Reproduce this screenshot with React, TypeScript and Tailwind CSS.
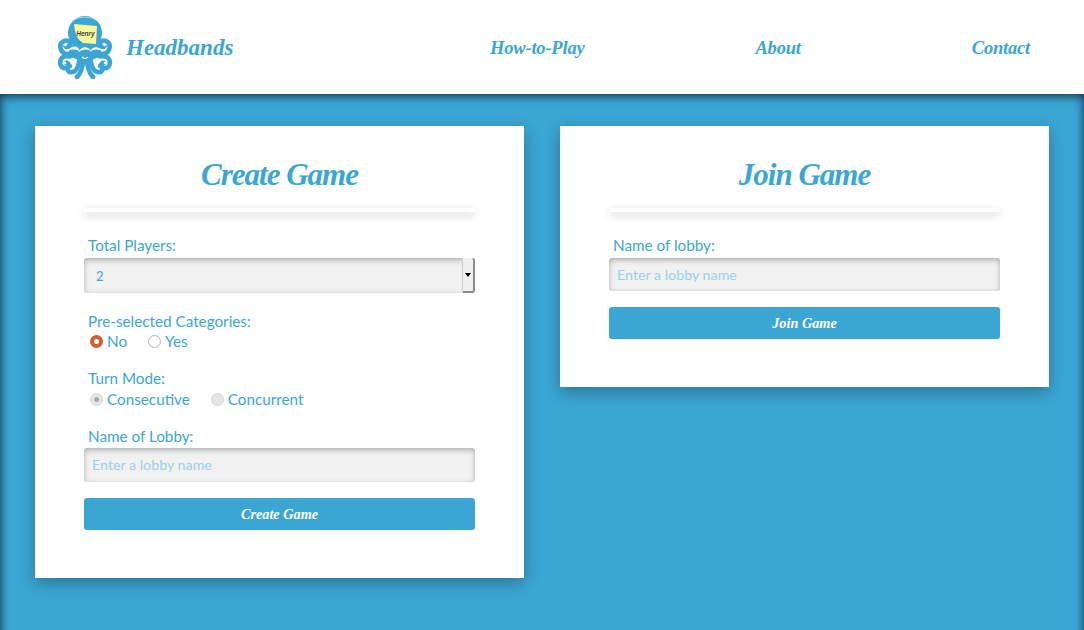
const blue = 'text-[#3ba6d4]';
const logoFont = "[font-family:'Liberation_Serif',serif] italic font-bold";
const bodyFont = "[font-family:Lato,'Open_Sans',sans-serif]";

function Octopus() {
  return (
    <svg width="56" height="64" viewBox="0 0 56 64" className="shrink-0">
      <g fill="none" stroke="#3ba6d4" strokeWidth="4.6" strokeLinecap="round">
        <path d="M20 35 C13 41 5 40 3.5 33 C2 26 11 23 13 28 C14 31 10 33 8.5 31" />
        <path d="M36 35 C43 41 51 40 52.5 33 C54 26 45 23 43 28 C42 31 46 33 47.5 31" />
        <path d="M18 38 C13 45 10 39 6 42 C1 46 3 54 9 53 C13 52 12 47 9 48" />
        <path d="M38 38 C43 45 46 39 50 42 C55 46 53 54 47 53 C43 52 44 47 47 48" />
        <path d="M23 42 C22 50 20 57 15 57 C10 58 9 52 13 51" />
        <path d="M33 42 C34 50 36 57 41 57 C46 58 47 52 43 51" />
        <path d="M26 44 C26 52 24 58 20 62" />
        <path d="M30 44 C30 52 32 58 36 62" />
      </g>
      <circle cx="28" cy="18" r="17" fill="#3ba6d4" />
      <ellipse cx="28" cy="36" rx="16" ry="10" fill="#3ba6d4" />
      <path d="M15 6 Q28 -2 41 6" fill="none" stroke="#a9dcf0" strokeWidth="1" />
      <g fill="#ffffff">
        <path d="M11 36 C14 30 22 30 23 37 C20 34 15 34 11 36 Z" />
        <path d="M22 37 C24 31 31 31 34 36 C30 34 26 34 22 37 Z" />
        <path d="M33 37 C35 31 42 31 45 36 C41 34 37 34 33 37 Z" />
        <circle cx="8.5" cy="30" r="1.3" />
        <circle cx="47.5" cy="30" r="1.3" />
        <circle cx="8" cy="48" r="1.3" />
        <circle cx="48" cy="48" r="1.3" />
      </g>
      <path d="M25 42 Q28 45 31 42" fill="none" stroke="#ffffff" strokeWidth="1.2" />
      <path d="M17 9 L40 11 L39 29 L26 28 Q18 24 17 9 Z" fill="#fdf89a" />
      <text x="28.5" y="20.5" textAnchor="middle" fontSize="6.5" fontWeight="bold" fontStyle="italic" fontFamily="Liberation Sans, sans-serif" fill="#444444">
        Henry
      </text>
    </svg>
  );
}

function Radio({ label, checked, disabled }: { label: string; checked?: boolean; disabled?: boolean }) {
  let circle = 'border border-[#b4b4b4] bg-white';
  if (checked && !disabled) circle = 'border-[4px] border-[#cf5f2e] bg-white';
  if (disabled) circle = 'border border-[#d6d6d6] bg-[#e6e6e6]';
  return (
    <label className="flex items-center gap-[4px]">
      <span className={`flex h-[13px] w-[13px] items-center justify-center rounded-full ${circle}`}>
        {checked && disabled && <span className="h-[5px] w-[5px] rounded-full bg-[#a8a8a8]" />}
      </span>
      {label}
    </label>
  );
}

function Card({ title, children }: { title: string; children: React.ReactNode }) {
  return (
    <section className="w-[489px] bg-white px-[49px] pt-[28px] pb-[48px] shadow-[0_5px_15px_rgba(0,0,0,0.3)]">
      <h2 className={`${logoFont} text-center text-[31px] leading-[42px] tracking-[-1px] ${blue}`}>{title}</h2>
      <div className="mt-[12px] h-[4px] bg-white shadow-[0_3px_8px_rgba(0,0,0,0.2)]" />
      {children}
    </section>
  );
}

function TextField({ tall }: { tall?: boolean }) {
  return (
    <input
      placeholder="Enter a lobby name"
      className={`${tall ? 'h-[34px]' : 'h-[33px]'} w-full rounded-[3px] bg-[#f1f1f1] px-[8px] pb-[1px] text-[14.25px] text-[#3ba6d4] shadow-[inset_0_3px_6px_-1px_rgba(0,0,0,0.25),inset_0_0_4px_rgba(0,0,0,0.1)] outline-none placeholder:text-[#9bd0e6]`}
    />
  );
}

export default function App() {
  return (
    <div className={`flex h-[630px] w-[1084px] flex-col overflow-hidden bg-[#3ba6d4] ${bodyFont}`}>
      <header className="z-10 flex h-[94px] shrink-0 items-center bg-white pl-[57px] pr-[54px]">
        <Octopus />
        <span className={`${logoFont} mt-[2px] ml-[13px] text-[23px] ${blue}`}>Headbands</span>
        <nav className={`${logoFont} mt-[3px] ml-auto flex text-[18.5px] tracking-[-0.2px] ${blue}`}>
          <a className="mr-[171px]">How-to-Play</a>
          <a className="mr-[171px]">About</a>
          <a>Contact</a>
        </nav>
      </header>

      <main className="flex h-[560px] shrink-0 items-start gap-[36px] px-[35px] pt-[32px] shadow-[inset_0_3px_10px_rgba(0,0,0,0.45),inset_0_0_10px_rgba(0,0,0,0.4)]">
        <Card title="Create Game">
          <div className={`mt-[23px] text-[15.25px] ${blue}`}>
            <p className="pl-[4px] leading-[20px]">Total Players:</p>
            <div className="relative mt-[3px]">
              <select className="h-[35px] w-full appearance-none rounded-[3px] bg-[#f1f1f1] pl-[12px] pt-[2px] text-[13px] shadow-[inset_0_3px_6px_-1px_rgba(0,0,0,0.25),inset_0_0_4px_rgba(0,0,0,0.1)] outline-none">
                <option>2</option>
              </select>
              <span className="absolute top-0 right-0 flex h-[35px] w-[12px] items-center justify-center rounded-r-[3px] border-r-2 border-b-2 border-[#8a8a8a] bg-[#f0f0f0] shadow-[-1px_0_0_#cfcfcf]">
                <span className="h-0 w-0 border-x-[3px] border-t-[4px] border-x-transparent border-t-black" />
              </span>
            </div>

            <p className="mt-[18px] pl-[4px] leading-[20px]">Pre-selected Categories:</p>
            <div className="flex gap-[21px] pl-[6px] leading-[20px]">
              <Radio label="No" checked />
              <Radio label="Yes" />
            </div>

            <p className="mt-[17px] pl-[4px] leading-[20px]">Turn Mode:</p>
            <div className="mt-[1px] flex gap-[21px] pl-[6px] leading-[20px]">
              <Radio label="Consecutive" checked disabled />
              <Radio label="Concurrent" disabled />
            </div>

            <p className="mt-[17px] mb-[2px] pl-[4px] leading-[20px]">Name of Lobby:</p>
            <TextField tall />
            <button className={`${logoFont} mt-[16px] h-[32px] w-full rounded-[3px] bg-[#3ba6d4] pt-[1px] text-[14.25px] text-white`}>
              Create Game
            </button>
          </div>
        </Card>

        <Card title="Join Game">
          <div className={`mt-[23px] text-[15.25px] ${blue}`}>
            <p className="mb-[3px] pl-[4px] leading-[20px]">Name of lobby:</p>
            <TextField />
            <button className={`${logoFont} mt-[16px] h-[32px] w-full rounded-[3px] bg-[#3ba6d4] pt-[1px] text-[14.25px] text-white`}>
              Join Game
            </button>
          </div>
        </Card>
      </main>
    </div>
  );
}
